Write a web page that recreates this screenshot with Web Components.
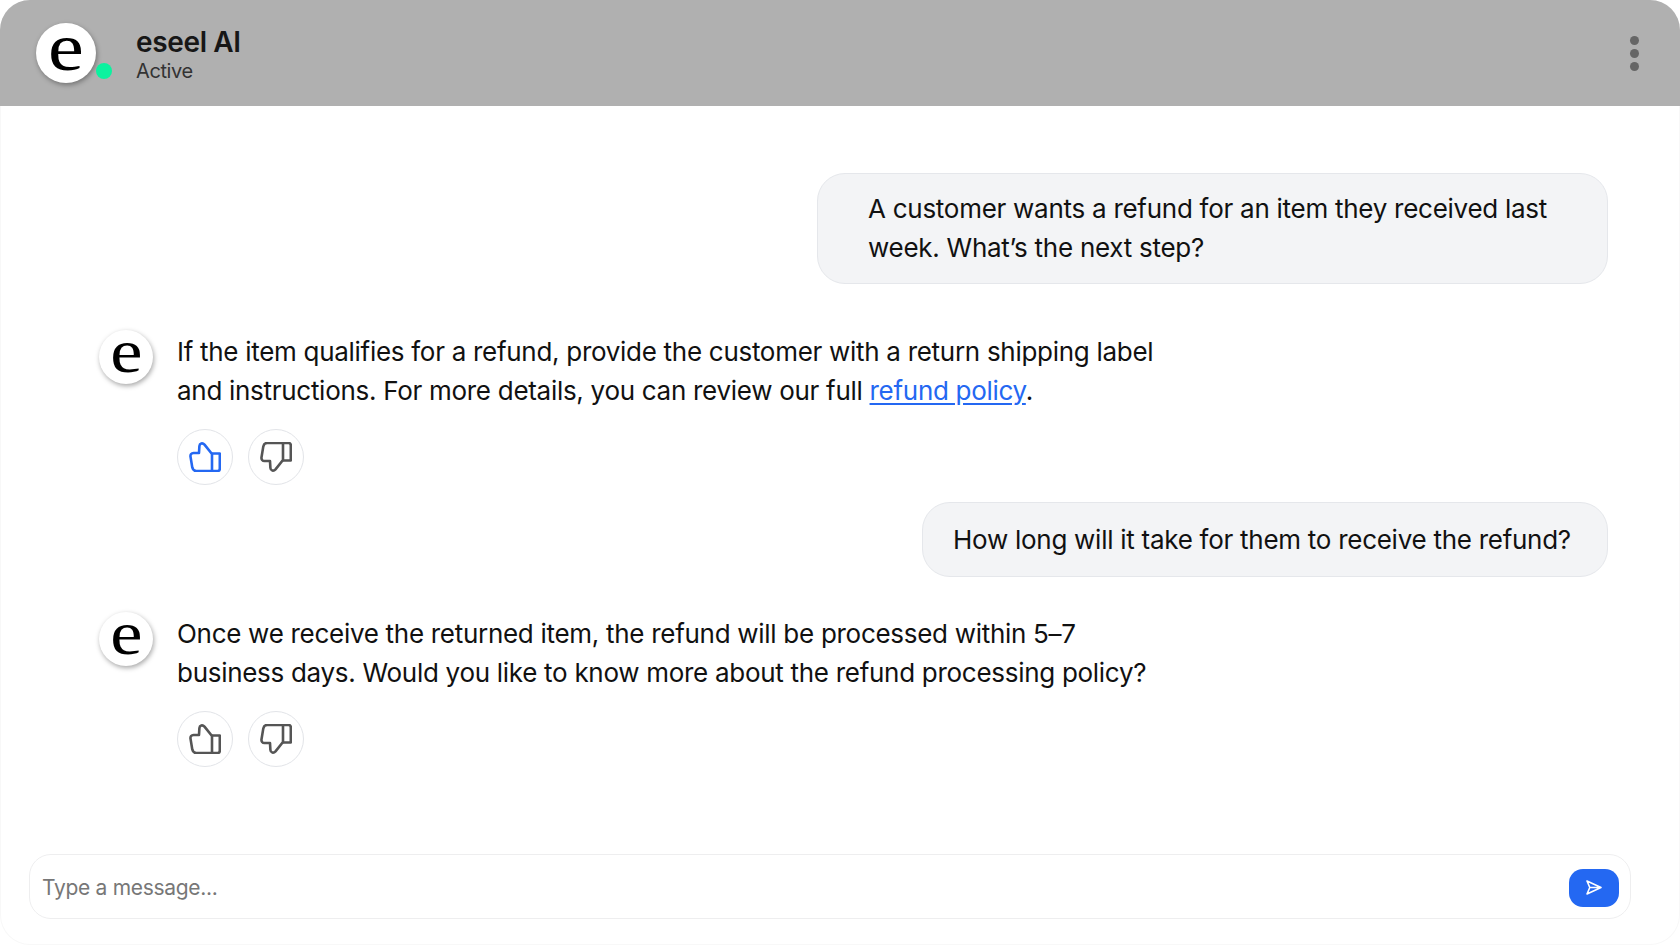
<!DOCTYPE html>
<html lang="en"><head><meta charset="utf-8"><title>eseel AI</title>
<style>
html,body{margin:0;height:100%;background:#fff}
body{font-family:Inter,"Noto Sans",sans-serif;color:#111}
</style></head><body>
<chat-app>
  <chat-header slot="header" name="eseel AI" status="Active"></chat-header>
  <user-bubble style="--pad:15px 40px 16px 50px;--w:791px">A customer wants a refund for an item they received last week. What’s the next step?</user-bubble>
  <bot-message style="margin-top:46px" liked>If the item qualifies for a refund, provide the customer with a return shipping label<br>and instructions. For more details, you can review our full <a href="#">refund policy</a>.</bot-message>
  <user-bubble style="--pad:17px 20px 17px 30px;--w:686px;margin-top:17px">How long will it take for them to receive the refund?</user-bubble>
  <bot-message style="margin-top:35px">Once we receive the returned item, the refund will be processed within 5–7<br>business days. Would you like to know more about the refund processing policy?</bot-message>
  <chat-composer slot="footer"></chat-composer>
</chat-app>
<script>
const def=(name,html,init)=>customElements.define(name,class extends HTMLElement{
  connectedCallback(){ if(this.shadowRoot)return; const r=this.attachShadow({mode:'open'}); r.innerHTML=html; init&&init(this,r); }
});
def('chat-app',`<style>
:host{display:flex;flex-direction:column;width:1680px;height:945px;box-sizing:border-box;border-radius:30px;overflow:hidden;box-shadow:inset 0 0 0 1px #f8f8f8;background:#fff}
.main{flex:1;display:flex;flex-direction:column;padding:67px 73px 0 99px;min-height:0}
.foot{padding:0 49px 26px 29px}
</style><slot name="header"></slot><div class="main"><slot></slot></div><div class="foot"><slot name="footer"></slot></div>`);
def('chat-logo',`<style>
:host{display:flex;width:var(--s,54px);height:var(--s,54px);flex:none;border-radius:50%;background:#fff;align-items:center;justify-content:center;box-shadow:1px 2px 5px rgba(0,0,0,.35);font-family:"Liberation Serif",serif;color:#000;line-height:1;font-size:calc(var(--s,54px)*1.12)}
span{display:block;transform:translateY(-8%) scaleX(1.2)}
</style><span>e</span>`);
def('chat-header',`<style>
:host{display:flex;align-items:center;flex:none;height:106px;background:#b0b0b0;padding:0 40px 0 36px;box-sizing:border-box}
.av{position:relative;display:block;height:60px;--s:60px}
.dot{position:absolute;right:-16px;bottom:4px;width:16px;height:16px;border-radius:50%;background:#0bf29f}
.txt{margin-left:41px;flex:1;margin-top:1px}
.n{font-size:28px;font-weight:600;line-height:34px;color:#171717;letter-spacing:-.35px;margin-left:-1px}
.s{font-size:20px;line-height:24px;color:#333;letter-spacing:-.4px;margin-left:-1px}
.dots{display:flex;flex-direction:column;gap:4px;width:10px;margin-top:1px}
.dots i{width:9px;height:9px;border-radius:50%;background:#666}
</style><div class="av"><chat-logo></chat-logo><div class="dot"></div></div>
<div class="txt"><div class="n"></div><div class="s"></div></div>
<div class="dots"><i></i><i></i><i></i></div>`,(h,r)=>{r.querySelector('.n').textContent=h.getAttribute('name');r.querySelector('.s').textContent=h.getAttribute('status');});
def('user-bubble',`<style>
:host{display:block;align-self:flex-end;box-sizing:border-box;width:var(--w);padding:var(--pad);background:#f3f4f6;border:1px solid #e5e7eb;border-radius:28px;font-size:26px;line-height:39px;color:#111;letter-spacing:-.27px;margin-right:-1px}
</style><slot></slot>`);
def('feedback-button',`<style>
:host{display:flex;width:56px;height:56px;box-sizing:border-box;border-radius:50%;border:1.5px solid #e2e4e8;background:#fff;align-items:center;justify-content:center;color:var(--c,#555)}
svg{display:block;width:32px;height:30px}
:host([down]) svg{transform:scaleY(-1)}
</style><svg viewBox="0 0 32 30" fill="none" stroke="currentColor" stroke-width="2.6" stroke-linejoin="round" stroke-linecap="round"><path d="M23 12 L15.5 2.6 C13.5 0.4 10.6 1.2 10.4 4 L10 11 H4.5 C2.4 11 1.2 12.6 1.5 14.6 L3.3 25.6 C3.7 27.6 5 29 7.2 29 H23 Z"/><path d="M23 11.5 H30.8 V26.5 C30.8 28 30 29 28.5 29 H23"/></svg>`);
def('bot-message',`<style>
:host{display:flex;gap:24px;align-items:flex-start}
.c{font-size:26px;line-height:39px;color:#111;margin-top:2px;letter-spacing:-.29px}
::slotted(a){color:#2468f2;text-decoration:underline;text-underline-offset:3px}
.fb{display:flex;gap:15px;margin-top:19px}
.like{--c:#555}
:host([liked]) .like{--c:#2468f2}
</style><chat-logo></chat-logo><div class="c"><slot></slot><div class="fb"><feedback-button class="like"></feedback-button><feedback-button down></feedback-button></div></div>`);
def('chat-composer',`<style>
:host{display:flex;align-items:center;height:65px;box-sizing:border-box;border:1px solid #eeeeef;border-radius:22px;padding:0 11px 0 12px;background:#fff}
span{flex:1;font-size:21px;letter-spacing:-.3px;color:#777;padding-top:1px}
button{all:unset;display:flex;width:50px;height:38px;border-radius:14px;background:#2468f2;align-items:center;justify-content:center;margin-top:2px}
svg{width:16px;height:15px;display:block}
</style><span>Type a message...</span><button aria-label="Send"><svg viewBox="0 0 16 15" fill="none" stroke="#fff" stroke-width="1.6" stroke-linejoin="round" stroke-linecap="round"><path d="M1 1 L15 7.5 L1 14 L3.8 7.5 Z M3.8 7.5 H13"/></svg></button>`);
</script>
</body></html>
